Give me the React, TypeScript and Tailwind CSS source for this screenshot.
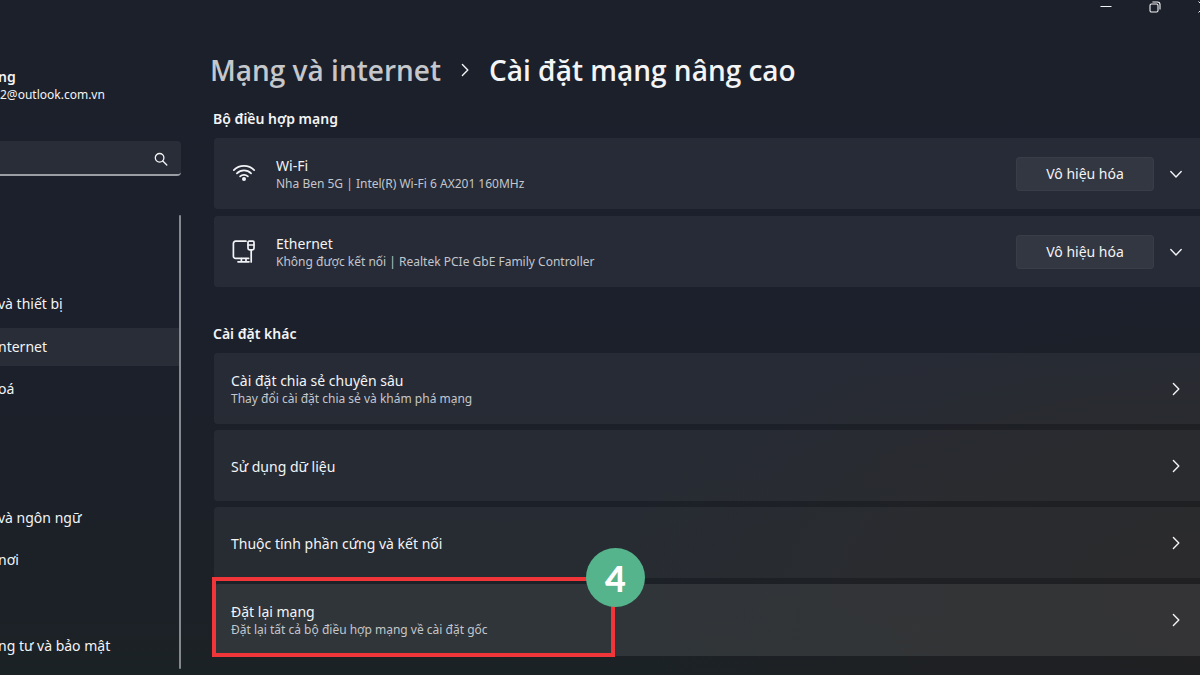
import React from "react";

const navItems = [
  { label: "", active: false },
  { label: "và thiết bị", active: false },
  { label: "nternet", active: true },
  { label: "oá", active: false },
  { label: "", active: false },
  { label: "", active: false },
  { label: "và ngôn ngữ", active: false },
  { label: "nơi", active: false },
  { label: "", active: false },
  { label: "ng tư và bảo mật", active: false },
];

const otherSettings = [
  {
    title: "Cài đặt chia sẻ chuyên sâu",
    detail: "Thay đổi cài đặt chia sẻ và khám phá mạng",
  },
  { title: "Sử dụng dữ liệu" },
  { title: "Thuộc tính phần cứng và kết nối" },
];

const WifiIcon = () => (
  <svg className="size-6 shrink-0" viewBox="0 0 24 24" fill="none" stroke="currentColor" strokeWidth="1.7" strokeLinecap="round">
    <path d="M1.8 8.2a14.4 14.4 0 0 1 20.4 0" />
    <path d="M4.9 11.4a10 10 0 0 1 14.2 0" />
    <path d="M8.1 14.4a5.6 5.6 0 0 1 7.8 0" />
    <circle cx="12" cy="17" r="2" fill="currentColor" stroke="none" />
  </svg>
);

const EthernetIcon = () => (
  <svg className="size-6 shrink-0" viewBox="0 0 24 24" fill="none" stroke="currentColor" strokeWidth="1.7" strokeLinecap="round" strokeLinejoin="round">
    <path d="M14 1.2H3.6a2.2 2.2 0 0 0-2.2 2.2v12.8a2.2 2.2 0 0 0 2.2 2.2h13" />
    <path d="M6 21.8h11M9.4 18.6v3.2M14 18.6v3.2" />
    <path d="M17 1.2h4a1 1 0 0 1 1 1v6a1.600 1.600 0 0 1-1.600 1.600h-2.800a1.600 1.600 0 0 1-1.600-1.600v-6a1 1 0 0 1 1-1z" />
    <path d="M16.200 5h5.600M19.200 10v12" />
  </svg>
);

const Chevron = ({ down = false }: { down?: boolean }) => (
  <svg className="size-4 shrink-0" viewBox="0 0 16 16" fill="none" stroke="currentColor" strokeWidth="1.4" strokeLinecap="round" strokeLinejoin="round">
    <path d={down ? "M2.8 5.6 8 10.9l5.2-5.3" : "M5.4 2.6 10.8 8l-5.4 5.4"} />
  </svg>
);

const CardText = ({ title, detail }: { title: string; detail?: string }) => (
  <span className="flex-1 flex flex-col pt-0.5 text-left">
    <span className="text-sm leading-[18px]">{title}</span>
    {detail && (
      <span className="text-xs leading-[18px] text-[#c3c6cc]">{detail}</span>
    )}
  </span>
);

const AdapterCard = ({
  icon,
  title,
  detail,
}: {
  icon: React.ReactNode;
  title: string;
  detail: string;
}) => (
  <div className="h-[71px] flex items-center gap-5 pl-[18px] pr-4 rounded-l bg-white/5">
    {icon}
    <CardText title={title} detail={detail} />
    <div className="flex items-center gap-3.5">
      <button className="w-[138px] h-[34px] rounded bg-white/6 border border-white/3 text-sm">
        Vô hiệu hóa
      </button>
      <button aria-label={`Mở rộng ${title}`}>
        <Chevron down />
      </button>
    </div>
  </div>
);

const App = () => {
  return (
    <div className="min-h-screen flex overflow-hidden bg-[radial-gradient(ellipse_at_105%_88%,#202022_0%,#1f2023_16%,transparent_36%),linear-gradient(180deg,#1c202b_0%,#1b202c_45%,#1c2029_65%,#1c2127_88%,#1b2225_100%)] text-[#f3f4f6] font-['Noto_Sans',sans-serif]">
      {/* Sidebar */}
      <aside className="w-[181px] shrink-0 overflow-hidden pt-[68px] pb-1.5">
        <p className="-ml-0.5 text-sm leading-[18px] font-semibold">ng</p>
        <p className="text-xs leading-[18px]">2@outlook.com.vn</p>

        <div className="relative mt-[37px]">
          <input
            type="text"
            aria-label="Tìm cài đặt"
            className="block w-full h-[35px] pr-9 rounded-r bg-white/6 border-b-2 border-[#9b9ea5] outline-none text-sm"
          />
          <svg className="absolute right-3 top-[11px] size-4" viewBox="0 0 16 16" fill="none" stroke="currentColor" strokeWidth="1.3" strokeLinecap="round">
            <circle cx="6.6" cy="5.8" r="4.3" />
            <path d="m9.8 9 4 4" />
          </svg>
        </div>

        <div className="mt-[39px] flex h-[454px]">
          <nav className="flex-1 -ml-0.5 mt-[25px] h-[427px] grid grid-rows-10">
            {navItems.map((item, index) =>
              item.label ? (
                <a
                  key={index}
                  href="#"
                  className={`h-[38px] self-center flex items-center text-sm ${item.active ? "bg-white/6" : ""}`}
                >
                  {item.label}
                </a>
              ) : (
                <span key={index} />
              ),
            )}
          </nav>
          <div className="w-0.5 rounded-full bg-[#85888f]" />
        </div>
      </aside>

      {/* Content */}
      <div className="flex-1 min-w-0 pl-[33px]">
        <div className="h-3.5 flex justify-end -mr-7">
          <button aria-label="Thu nhỏ" className="w-[49px] flex items-center justify-center">
            <svg className="size-3" viewBox="0 0 12 12" stroke="currentColor">
              <path d="M.5 5.5h11" />
            </svg>
          </button>
          <button aria-label="Khôi phục" className="w-[49px] flex items-center justify-center">
            <svg className="size-3" viewBox="0 0 12 12" fill="none" stroke="currentColor" strokeWidth="1.1">
              <rect x="1" y="3" width="8" height="8" rx="1.4" />
              <path d="M3.4 1h5A2.6 2.6 0 0 1 11 3.6v5" />
            </svg>
          </button>
          <button aria-label="Đóng" className="w-[49px] flex items-center justify-center">
            <svg className="size-3" viewBox="0 0 12 12" stroke="currentColor">
              <path d="m.5.5 11 11M11.5.5l-11 11" />
            </svg>
          </button>
        </div>

        <main>
          <h1 className="-ml-1 mt-9 flex items-center gap-4 text-[28px] leading-10 font-semibold font-['Open_Sans',sans-serif] whitespace-nowrap">
            <a href="#" className="text-[#c5c7cb]">
              Mạng và internet
            </a>
            <Chevron />
            <span>Cài đặt mạng nâng cao</span>
          </h1>

          <section className="mt-[19px]">
            <h2 className="-ml-px mb-[9px] text-sm leading-5 font-semibold">
              Bộ điều hợp mạng
            </h2>
            <div className="flex flex-col gap-[7px]">
              <AdapterCard
                icon={<WifiIcon />}
                title="Wi-Fi"
                detail="Nha Ben 5G | Intel(R) Wi-Fi 6 AX201 160MHz"
              />
              <AdapterCard
                icon={<EthernetIcon />}
                title="Ethernet"
                detail="Không được kết nối | Realtek PCIe GbE Family Controller"
              />
            </div>
          </section>

          <section className="mt-[37px]">
            <h2 className="-ml-px mb-[9px] text-sm leading-5 font-semibold">
              Cài đặt khác
            </h2>
            <div className="flex flex-col gap-1.5">
              {otherSettings.map((item) => (
                <button
                  key={item.title}
                  className="h-[71px] flex items-center pl-[17px] pr-4 rounded-l bg-white/5"
                >
                  <CardText title={item.title} detail={item.detail} />
                  <Chevron />
                </button>
              ))}
              <div className="relative">
                <button className="w-full h-[72px] flex items-center pl-[17px] pr-4 rounded-l bg-white/9">
                  <CardText
                    title="Đặt lại mạng"
                    detail="Đặt lại tất cả bộ điều hợp mạng về cài đặt gốc"
                  />
                  <Chevron />
                </button>
                {/* Step marker over the reset card */}
                <div className="absolute -left-0.5 -top-[7px] -bottom-px w-[403px] border-4 border-[#f03638] pointer-events-none">
                  <span className="absolute -right-[34px] -top-[33px] size-[59px] rounded-full bg-[#55b48c] flex items-center justify-center text-white text-4xl font-black font-['Lato',sans-serif]">
                    4
                  </span>
                </div>
              </div>
            </div>
          </section>
        </main>
      </div>
    </div>
  );
};

export default App;
